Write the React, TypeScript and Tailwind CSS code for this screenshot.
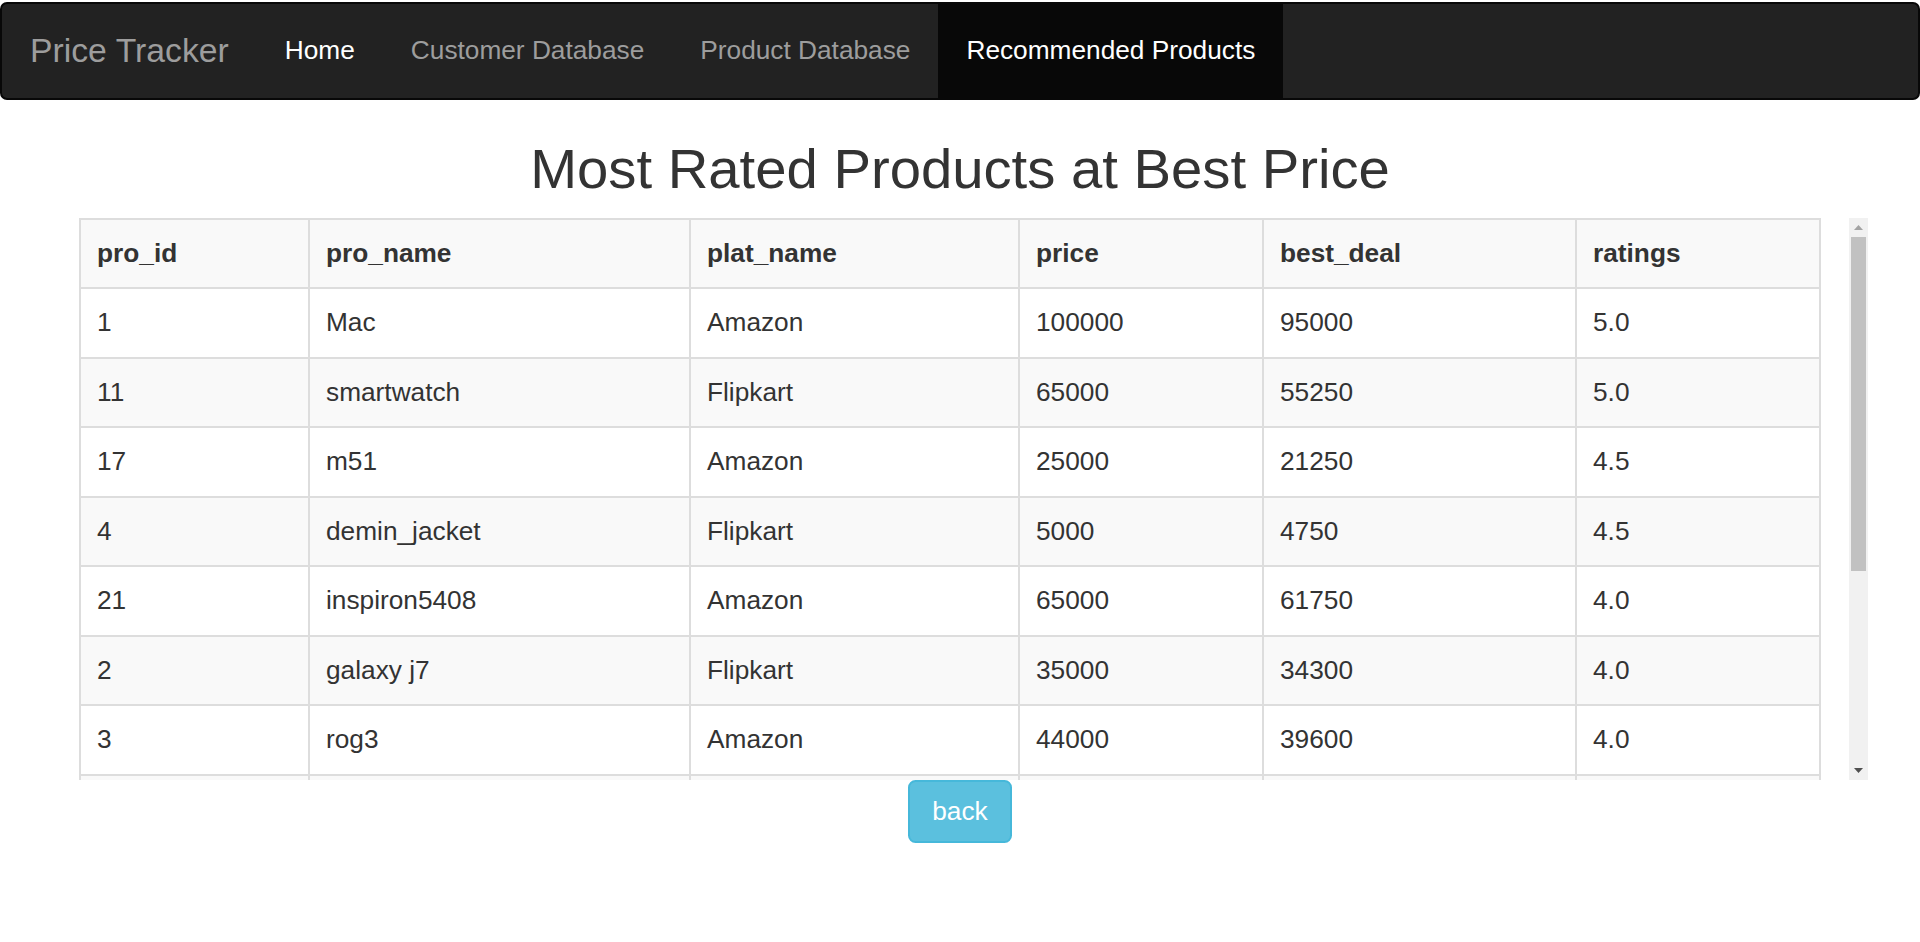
import React from "react";

interface Product {
  pro_id: string;
  pro_name: string;
  plat_name: string;
  price: string;
  best_deal: string;
  ratings: string;
}

const products: Product[] = [
  { pro_id: "1", pro_name: "Mac", plat_name: "Amazon", price: "100000", best_deal: "95000", ratings: "5.0" },
  { pro_id: "11", pro_name: "smartwatch", plat_name: "Flipkart", price: "65000", best_deal: "55250", ratings: "5.0" },
  { pro_id: "17", pro_name: "m51", plat_name: "Amazon", price: "25000", best_deal: "21250", ratings: "4.5" },
  { pro_id: "4", pro_name: "demin_jacket", plat_name: "Flipkart", price: "5000", best_deal: "4750", ratings: "4.5" },
  { pro_id: "21", pro_name: "inspiron5408", plat_name: "Amazon", price: "65000", best_deal: "61750", ratings: "4.0" },
  { pro_id: "2", pro_name: "galaxy j7", plat_name: "Flipkart", price: "35000", best_deal: "34300", ratings: "4.0" },
  { pro_id: "3", pro_name: "rog3", plat_name: "Amazon", price: "44000", best_deal: "39600", ratings: "4.0" },
];

const columns: (keyof Product)[] = ["pro_id", "pro_name", "plat_name", "price", "best_deal", "ratings"];
const widths = ["w-[229px]", "w-[381px]", "w-[329px]", "w-[244px]", "w-[313px]", "w-[244px]"];

const cell = "border-2 border-[#ddd] px-[16px] py-[15px] text-left align-top leading-[37.5px]";

function Navbar() {
  const links = ["Home", "Customer Database", "Product Database"];
  return (
    <nav className="mt-[2px] flex h-[98px] items-stretch rounded-[7px] border-2 border-[#080808] bg-[#222]">
      <a className="flex items-center px-[28px] text-[33.75px] leading-[37.5px] text-[#9d9d9d]">Price Tracker</a>
      <ul className="flex items-stretch">
        {links.map((l, i) => (
          <li key={l} className="flex">
            <a
              className={`flex items-center px-[28px] text-[26.25px] leading-[37.5px] ${
                i === 0 ? "text-white" : "text-[#9d9d9d]"
              }`}
            >
              {l}
            </a>
          </li>
        ))}
        <li className="flex">
          <a className="flex items-center bg-[#080808] px-[28px] text-[26.25px] leading-[37.5px] text-white">
            Recommended Products
          </a>
        </li>
      </ul>
    </nav>
  );
}

function Scrollbar() {
  return (
    <div className="flex w-[19px] flex-col bg-[#f1f1f1]">
      <div className="flex h-[19px] items-center justify-center">
        <svg width="9" height="5" viewBox="0 0 9 5">
          <polygon points="4.5,0 9,5 0,5" fill="#a3a3a3" />
        </svg>
      </div>
      <div className="mx-[2px] h-[334px] bg-[#c1c1c1]" />
      <div className="flex-1" />
      <div className="flex h-[19px] items-center justify-center">
        <svg width="9" height="5" viewBox="0 0 9 5">
          <polygon points="0,0 9,0 4.5,5" fill="#505050" />
        </svg>
      </div>
    </div>
  );
}

export default function App() {
  return (
    <div className="min-h-screen bg-white font-['Liberation_Sans',Arial,sans-serif] text-[#333]">
      <Navbar />
      <h2 className="mt-[37.5px] mb-[18.5px] text-center text-[56.25px] leading-[1.1] font-normal">
        Most Rated Products at Best Price
      </h2>
      <div className="mx-auto flex h-[562px] w-[1816px]">
        <div className="flex-1 overflow-hidden pl-[27px] pr-[28px]">
          <table className="w-full border-collapse text-[26.25px]">
            <colgroup>
              {widths.map((w, i) => (
                <col key={i} className={w} />
              ))}
            </colgroup>
            <tbody>
              <tr className="bg-[#f9f9f9]">
                {columns.map((c) => (
                  <th key={c} className={`${cell} font-bold`}>
                    {c}
                  </th>
                ))}
              </tr>
              {products.map((p, idx) => (
                <tr key={p.pro_id} className={idx % 2 === 0 ? "bg-white" : "bg-[#f9f9f9]"}>
                  {columns.map((c) => (
                    <td key={c} className={cell}>
                      {p[c]}
                    </td>
                  ))}
                </tr>
              ))}
              {/* next row, scrolled out of view */}
              <tr className="bg-[#f9f9f9]">
                {columns.map((c) => (
                  <td key={c} className={cell}>
                    {"\u00a0"}
                  </td>
                ))}
              </tr>
            </tbody>
          </table>
        </div>
        <Scrollbar />
      </div>
      <button className="mx-auto block rounded-[7.5px] border-2 border-[#46b8da] bg-[#5bc0de] px-[22.5px] py-[11px] text-[26.25px] leading-[37.5px] text-white">
        back
      </button>
    </div>
  );
}
